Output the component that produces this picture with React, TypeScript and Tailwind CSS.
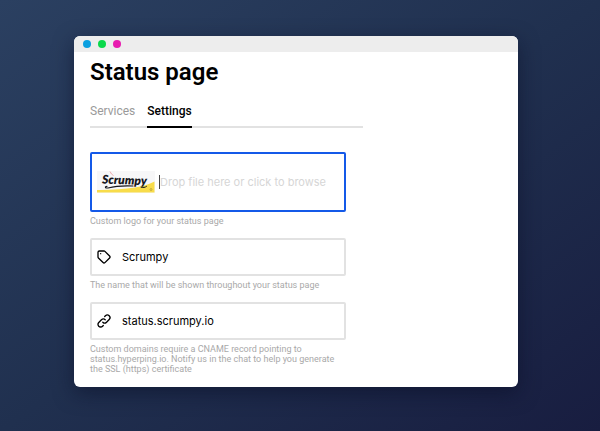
import { useState } from "react";
import type { ReactNode } from "react";

type Tab = "Services" | "Settings";

const tabs: Tab[] = ["Services", "Settings"];

const ScrumpyLogo = () => (
  <svg
    viewBox="0 0 58 22"
    className="h-[22px] w-[58px] shrink-0"
    role="img"
    aria-label="Scrumpy logo"
  >
    <rect width="58" height="22" fill="#f7f7f8" />
    <path d="M0 19C14 19.2 27 18 38 16.6C45 15.4 52 13.4 57.5 10.5V21.5H0Z" fill="#f8dc4a" />
    <path d="M13 0.5L14.5 3L16.5 4.5" stroke="#eba3a8" strokeWidth="0.9" fill="none" />
    <text
      x="5"
      y="12.5"
      transform="rotate(2 5 12.5)"
      fontFamily="Lato, sans-serif"
      fontSize="12"
      fontWeight="800"
      fontStyle="italic"
      fill="#16161c"
    >
      Scrumpy
    </text>
    <path
      d="M36 15C27 14.6 18 15.2 11 17C8 17.4 7.5 15.6 10 15.4"
      stroke="#16161c"
      strokeWidth="1.1"
      strokeLinecap="round"
      fill="none"
    />
    <path
      d="M44 16.2C46 17 48 16.5 49.5 15.4"
      stroke="#16161c"
      strokeWidth="1"
      strokeLinecap="round"
      fill="none"
    />
    <circle cx="54" cy="18.5" r="1" fill="none" stroke="#a48f35" strokeWidth="0.6" />
  </svg>
);

type IconProps = {
  title: string;
};

const TagIcon = ({ title }: IconProps) => (
  <svg
    viewBox="0 0 24 24"
    className="size-4 shrink-0"
    role="img"
    aria-label={title}
    fill="none"
    stroke="currentColor"
    strokeWidth="2"
    strokeLinecap="round"
    strokeLinejoin="round"
  >
    <path d="M5 3h7c.5 0 1 .2 1.4.6l7 7a2 2 0 0 1 0 2.8l-7 7a2 2 0 0 1-2.8 0l-7-7A2 2 0 0 1 3 12V5a2 2 0 0 1 2-2z" />
    <path d="M7 7h.01" />
  </svg>
);

const LinkIcon = ({ title }: IconProps) => (
  <svg
    viewBox="0 0 24 24"
    className="size-4 shrink-0"
    role="img"
    aria-label={title}
    fill="none"
    stroke="currentColor"
    strokeWidth="2"
    strokeLinecap="round"
    strokeLinejoin="round"
  >
    <path d="M13.828 10.172a4 4 0 0 0-5.656 0l-4 4a4 4 0 1 0 5.656 5.656l1.102-1.101" />
    <path d="M10.172 13.828a4 4 0 0 0 5.656 0l4-4a4 4 0 0 0-5.656-5.656l-1.1 1.1" />
  </svg>
);

type FieldProps = {
  id: string;
  icon: ReactNode;
  value: string;
  help: string;
  onChange: (value: string) => void;
};

const Field = ({ id, icon, value, help, onChange }: FieldProps) => (
  <div>
    <div className="flex h-[38px] items-center gap-2 rounded-xs border-2 border-[#e2e2e2] px-1">
      <label htmlFor={id}>{icon}</label>
      <input
        id={id}
        type="text"
        value={value}
        aria-describedby={`${id}-help`}
        onChange={(e) => onChange(e.target.value)}
        className="h-6 min-w-0 flex-1 pl-[2px] font-[Inter,sans-serif] text-[11px] outline-none"
      />
    </div>
    <p id={`${id}-help`} className="mt-1 text-[9px] leading-[10px] text-[#a9a9a9]">
      {help}
    </p>
  </div>
);

const App = () => {
  const [activeTab, setActiveTab] = useState<Tab>("Settings");
  const [name, setName] = useState("Scrumpy");
  const [domain, setDomain] = useState("status.scrumpy.io");

  return (
    <div className="min-h-screen bg-linear-to-br from-[#2b4061] via-[#20304f] to-[#181d40] pt-9 pr-[82px] pb-11 pl-[74px] font-[Roboto,sans-serif]">
      <main className="overflow-hidden rounded-md bg-white text-black shadow-[0_6px_20px_rgba(8,12,36,0.5)]">
        {/* Title bar */}
        <div className="flex h-4 items-center gap-[7px] bg-[#ededed] px-[9px]">
          <span className="size-2 rounded-full bg-[#0ba0e0]" />
          <span className="size-2 rounded-full bg-[#0bd94b]" />
          <span className="size-2 rounded-full bg-[#e81cb0]" />
        </div>

        <div className="px-4 pt-1 pb-[13px]">
          <h1 className="text-2xl leading-8 font-semibold">Status page</h1>

          <nav className="mt-3 flex max-w-[273px] gap-3 border-b-2 border-[#e2e2e2]">
            {tabs.map((tab) => (
              <button
                key={tab}
                type="button"
                onClick={() => setActiveTab(tab)}
                className={`-mb-[2px] h-7 border-b-2 pb-1 text-xs ${
                  tab === activeTab
                    ? "border-black font-medium text-black"
                    : "border-transparent text-[#9a9a9a]"
                }`}
              >
                {tab}
              </button>
            ))}
          </nav>

          <form className="mt-6 flex max-w-64 flex-col gap-3">
            {/* Logo upload */}
            <div>
              <label className="flex h-[60px] items-center gap-1 rounded-xs border-2 border-[#1459e8] px-[5px]">
                <ScrumpyLogo />
                <input type="file" accept="image/*" className="sr-only" />
                <span className="border-l border-[#444444] font-[Inter,sans-serif] text-[11px] leading-[14px] text-[#d6d6d6]">
                  Drop file here or click to browse
                </span>
              </label>
              <p className="mt-1 text-[9px] leading-[10px] text-[#a9a9a9]">
                Custom logo for your status page
              </p>
            </div>

            <Field
              id="name"
              icon={<TagIcon title="Name" />}
              value={name}
              onChange={setName}
              help="The name that will be shown throughout your status page"
            />
            <Field
              id="domain"
              icon={<LinkIcon title="Custom domain" />}
              value={domain}
              onChange={setDomain}
              help="Custom domains require a CNAME record pointing to status.hyperping.io. Notify us in the chat to help you generate the SSL (https) certificate"
            />
          </form>
        </div>
      </main>
    </div>
  );
};

export default App;
